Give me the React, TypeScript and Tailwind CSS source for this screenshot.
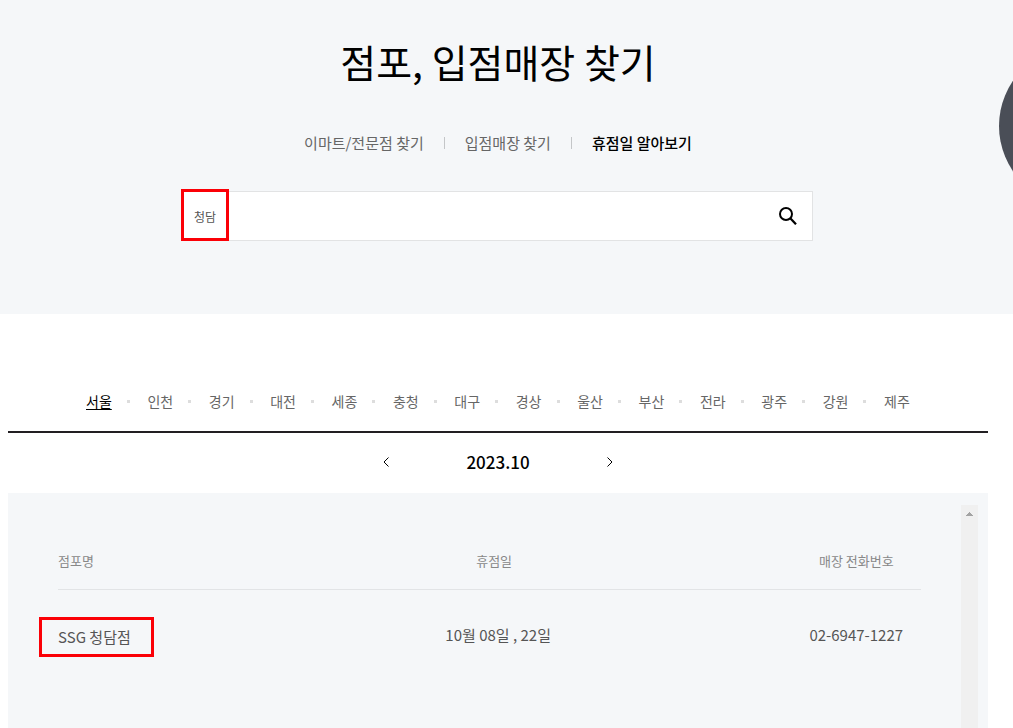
import { useState } from 'react';

type Store = {
  name: string;
  closed: string;
  phone: string;
};

const MENUS = ['이마트/전문점 찾기', '입점매장 찾기', '휴점일 알아보기'];

const REGIONS = [
  '서울',
  '인천',
  '경기',
  '대전',
  '세종',
  '충청',
  '대구',
  '경상',
  '울산',
  '부산',
  '전라',
  '광주',
  '강원',
  '제주',
];

const STORES: Store[] = [{ name: 'SSG 청담점', closed: '10월 08일 , 22일', phone: '02-6947-1227' }];

function SearchHeader() {
  const [keyword, setKeyword] = useState('청담');

  return (
    <header className="relative overflow-hidden bg-[#f5f7f9] pt-8 pr-[25px] pb-[73px] pl-2">
      <h1 className="text-center text-[39px] leading-[59px] text-black">점포, 입점매장 찾기</h1>
      <nav aria-label="매장 찾기" className="mt-10">
        <ul className="flex items-center justify-center gap-5 text-[15px] leading-6">
          {MENUS.map((menu, i) => (
            <li key={menu} className="flex items-center gap-5">
              {i > 0 && <span className="h-3 w-px bg-[#c4c6c8]" />}
              <a href="#" className={i === 2 ? 'font-medium text-black' : 'text-[#666666]'}>
                {menu}
              </a>
            </li>
          ))}
        </ul>
      </nav>
      <form
        className="relative mx-auto mt-9 flex h-[50px] max-w-[630px] items-center border border-[#e2e3e4] bg-white"
        onSubmit={(e) => e.preventDefault()}
      >
        <input
          type="text"
          aria-label="점포명 검색"
          value={keyword}
          onChange={(e) => setKeyword(e.target.value)}
          className="h-full min-w-0 flex-1 bg-transparent px-[10px] text-xs text-[#555555] outline-none"
        />
        <button type="submit" aria-label="검색" className="flex h-full w-12 items-center justify-center">
          <svg width="18" height="18" viewBox="0 0 18 18" fill="none" stroke="#000" strokeWidth="2">
            <circle cx="7" cy="7" r="6" />
            <path d="M11.3 11.3L17 17.3" strokeWidth="2.2" />
          </svg>
        </button>
        <span className="pointer-events-none absolute -top-[3px] -left-[3px] h-[52px] w-12 border-3 border-[#fb0007]" />
      </form>
      <button
        type="button"
        aria-label="빠른 메뉴"
        className="absolute top-[46px] -right-[146px] size-40 rounded-full bg-[#4a4e57]"
      />
    </header>
  );
}

function RegionTabs() {
  const [region, setRegion] = useState('서울');

  return (
    <ul className="flex justify-between border-b-2 border-[#221f22] px-[78px] pt-[75px] pb-[18px] text-sm leading-6">
      {REGIONS.map((name, i) => (
        <li key={name} className="flex items-center gap-[15px]">
          <button
            type="button"
            onClick={() => setRegion(name)}
            className={name === region ? 'text-black underline underline-offset-2' : 'text-[#666666]'}
          >
            {name}
          </button>
          {i < REGIONS.length - 1 && <span className="size-[3px] bg-[#dddddd]" />}
        </li>
      ))}
    </ul>
  );
}

function MonthPicker() {
  return (
    <div className="flex h-[60px] items-center justify-center gap-[73px] pb-[3px]">
      <button type="button" aria-label="이전 달" className="p-1">
        <svg width="6" height="10" viewBox="0 0 6 10" fill="none" stroke="#000">
          <path d="M5.5 0.5L1 5L5.5 9.5" />
        </svg>
      </button>
      <strong className="text-[17px] leading-6 font-medium text-black">2023.10</strong>
      <button type="button" aria-label="다음 달" className="p-1">
        <svg width="6" height="10" viewBox="0 0 6 10" fill="none" stroke="#000">
          <path d="M0.5 0.5L5 5L0.5 9.5" />
        </svg>
      </button>
    </div>
  );
}

function StoreTable() {
  return (
    <section className="flex flex-1 bg-[#f5f7f9] pt-3 pr-[10px] pl-[50px]">
      <div className="flex-1 pt-9 pr-10">
        <table className="w-full table-fixed">
          <thead>
            <tr className="border-b border-[#e2e4e6] text-[13px] leading-5 text-[#888888]">
              <th scope="col" className="w-[17%] pt-[10px] pb-[18px] text-left font-normal">
                점포명
              </th>
              <th scope="col" className="pt-[10px] pr-2 pb-[18px] font-normal">
                휴점일
              </th>
              <th scope="col" className="w-[15%] pt-[10px] pb-[18px] font-normal">
                매장 전화번호
              </th>
            </tr>
          </thead>
          <tbody>
            {STORES.map((store) => (
              <tr key={store.name} className="text-center align-top text-[15px] leading-6 text-[#555555]">
                <td className="pt-[35px] text-left">
                  <span className="relative">
                    {store.name}
                    <span className="pointer-events-none absolute -top-[9px] -left-[19px] h-10 w-[115px] border-3 border-[#fb0007]" />
                  </span>
                </td>
                <td className="pt-[33px]">{store.closed}</td>
                <td className="pt-[33px]">{store.phone}</td>
              </tr>
            ))}
          </tbody>
        </table>
      </div>
      <div className="flex w-[17px] justify-center bg-[#f0f0f0] pt-[7px]">
        <svg width="7" height="4" viewBox="0 0 7 4" fill="#a3a3a3">
          <path d="M3 0h1v1h1v1h1v1h1v1H0V3h1V2h1V1h1z" />
        </svg>
      </div>
    </section>
  );
}

export default function App() {
  return (
    <div className="flex min-h-screen flex-col bg-white font-['Noto_Sans_CJK_KR','Noto_Sans',sans-serif]">
      <SearchHeader />
      <main className="flex flex-1 flex-col pr-[25px] pl-2">
        <RegionTabs />
        <MonthPicker />
        <StoreTable />
      </main>
    </div>
  );
}
